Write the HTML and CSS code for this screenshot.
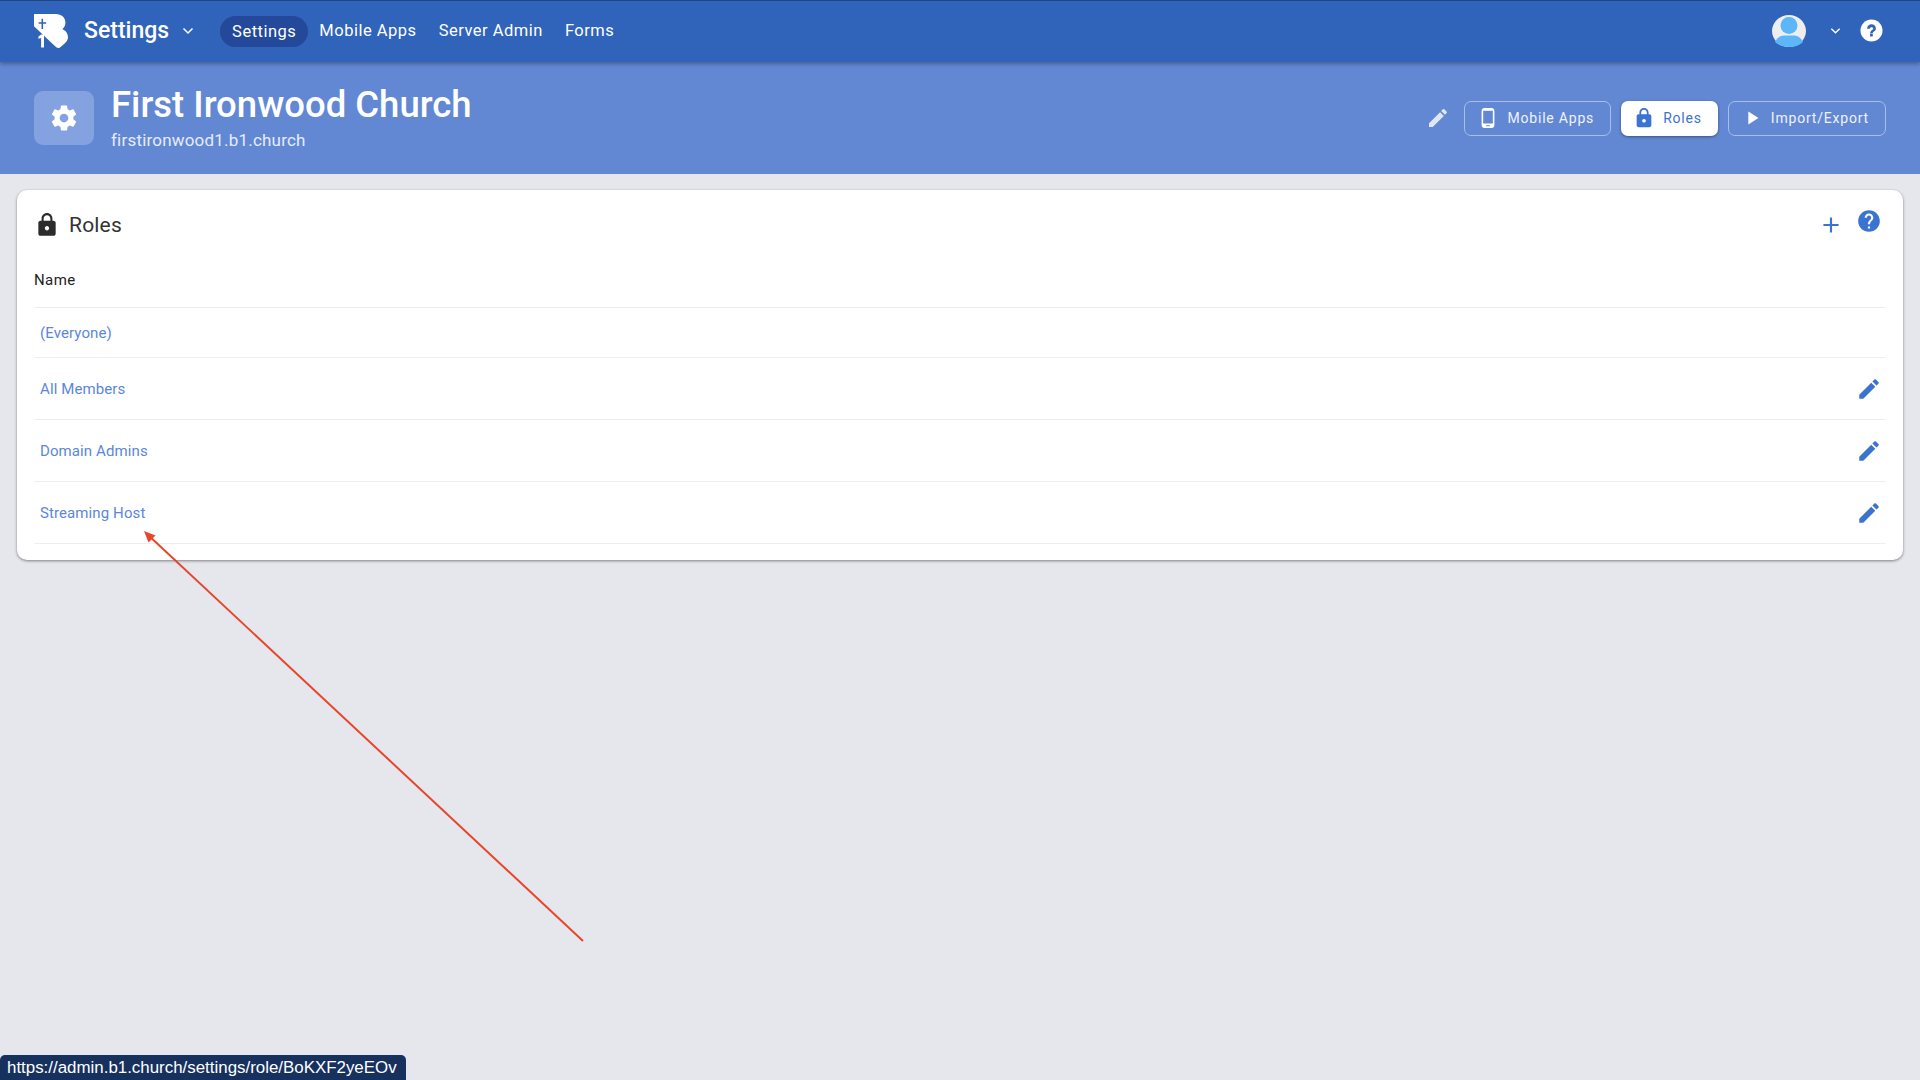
FILE: index.html
```html
<!DOCTYPE html>
<html lang="en">
<head>
<meta charset="utf-8">
<title>Roles</title>
<link rel="stylesheet" href="styles.css">
</head>
<body>
<header class="topbar">
  <svg class="logo" viewBox="0 0 33 33"><path fill="#fff" d="M0 0H21C27 0 30.500 3.500 30.500 8.500C30.500 11 29.500 13 27.500 14.500C30.800 16 33 19 33 22.500C33 26 30 28.500 27 31L24.500 33C23 33 21.800 32.500 20.500 31.200L0 12Z"/><path fill="#3063ba" d="M7.300 4.500H8.800V8H11.800V9.500H8.800V14.500H7.300V9.500H4.500V8H7.300Z"/><path fill="#fff" d="M7 20H9.700V32.500H6.900V23.300L4.300 24.100V21.800Z"/></svg>
  <div class="app-name">Settings</div>
  <svg class="chev chev-app" viewBox="0 0 12 8"><path d="M1.500 1.500 6 6l4.500-4.500"/></svg>
  <nav class="nav">
    <a class="nav-item nav-active">Settings</a>
    <a class="nav-item">Mobile Apps</a>
    <a class="nav-item">Server Admin</a>
    <a class="nav-item">Forms</a>
  </nav>
  <div class="top-right">
    <svg class="avatar" viewBox="0 0 34 32"><ellipse cx="17" cy="16" rx="17" ry="16" fill="#eeeeee"/><circle cx="17" cy="10.500" r="8.500" fill="#5db6fa"/><path fill="#5db6fa" d="M3 27C5 22.500 9 20.500 12 20.500H22C25 20.500 29 22.500 31 27C28 30 23 32 17 32S6 30 3 27Z"/></svg>
    <svg class="chev chev-user" viewBox="0 0 12 8"><path d="M1.500 1.500 6 6l4.500-4.500"/></svg>
    <svg class="help-top" viewBox="0 0 24 24"><circle cx="12" cy="12" r="11.500" fill="#fff"/><path fill="#3063ba" d="M13.300 18.200h-2.800v-2.700h2.800zM16.600 9.900c0 1.500-.8 2.300-1.700 3-.8.600-1.500 1.100-1.500 2h-2.800c0-1.700.8-2.500 1.700-3.200.8-.6 1.500-1 1.500-1.800 0-.8-.7-1.400-1.700-1.400-1.100 0-1.800.7-1.900 1.700H7.400C7.500 7.400 9.400 5.600 12 5.600c2.700 0 4.600 1.700 4.600 4.300z"/></svg>
  </div>
</header>

<section class="subheader">
  <div class="gear-box">
    <svg class="gear" viewBox="0 0 24 24"><path fill="#fff" d="M19.430 12.980c.04-.32.07-.64.07-.98s-.03-.66-.07-.98l2.110-1.650c.19-.15.24-.42.12-.64l-2-3.460c-.12-.22-.39-.3-.61-.22l-2.490 1c-.52-.4-1.080-.73-1.690-.98l-.38-2.650C14.460 2.180 14.250 2 14 2h-4c-.25 0-.46.18-.49.42l-.38 2.650c-.61.25-1.170.59-1.690.98l-2.490-1c-.23-.09-.49 0-.61.22l-2 3.460c-.13.22-.07.49.12.64l2.110 1.650c-.04.32-.07.65-.07.98s.03.66.07.98l-2.110 1.650c-.19.15-.24.42-.12.64l2 3.460c.12.22.39.3.61.22l2.490-1c.52.4 1.080.73 1.690.98l.38 2.650c.03.24.24.42.49.42h4c.25 0 .46-.18.49-.42l.38-2.650c.61-.25 1.170-.59 1.690-.98l2.490 1c.23.09.49 0 .61-.22l2-3.460c.12-.22.07-.49-.12-.64l-2.110-1.650zM12 15.500c-1.930 0-3.500-1.570-3.500-3.500s1.570-3.500 3.500-3.500 3.500 1.570 3.500 3.500-1.570 3.500-3.500 3.500z"/></svg>
  </div>
  <div class="org">
    <h1 class="org-name">First Ironwood Church</h1>
    <div class="org-domain">firstironwood1.b1.church</div>
  </div>
  <div class="actions">
    <svg class="icon-24 edit-light" viewBox="0 0 24 24"><path d="M3 17.250V21h3.750L17.810 9.940l-3.750-3.750L3 17.250zM20.710 7.040c.39-.39.39-1.020 0-1.410l-2.340-2.340c-.39-.39-1.020-.39-1.410 0l-1.830 1.830 3.750 3.750 1.830-1.830z"/></svg>
    <a class="btn btn-outline">
      <svg class="icon-24" viewBox="0 0 24 24"><path fill="#fff" d="M16 1H8C6.340 1 5 2.340 5 4v16c0 1.660 1.340 3 3 3h8c1.660 0 3-1.340 3-3V4c0-1.660-1.340-3-3-3zm-2 20h-4v-1h4v1zm3.250-3H6.750V4h10.500v14z"/></svg>
      Mobile Apps
    </a>
    <a class="btn btn-solid">
      <svg class="icon-24" viewBox="0 0 24 24"><path fill="#3b74d0" d="M18 8h-1V6c0-2.760-2.240-5-5-5S7 3.240 7 6v2H6c-1.100 0-2 .9-2 2v10c0 1.100.9 2 2 2h12c1.100 0 2-.9 2-2V10c0-1.100-.9-2-2-2zm-6 9c-1.100 0-2-.9-2-2s.9-2 2-2 2 .9 2 2-.9 2-2 2zm3.100-9H8.900V6c0-1.710 1.390-3.100 3.100-3.100 1.710 0 3.100 1.390 3.100 3.100v2z"/></svg>
      Roles
    </a>
    <a class="btn btn-outline">
      <svg class="icon-24" viewBox="0 0 24 24"><path fill="#fff" d="M8 5v14l11-7z"/></svg>
      Import/Export
    </a>
  </div>
</section>

<main class="content">
  <section class="card">
    <div class="card-head">
      <svg class="icon-24 lock-dark" viewBox="0 0 24 24"><path d="M18 8h-1V6c0-2.760-2.240-5-5-5S7 3.240 7 6v2H6c-1.100 0-2 .9-2 2v10c0 1.100.9 2 2 2h12c1.100 0 2-.9 2-2V10c0-1.100-.9-2-2-2zm-6 9c-1.100 0-2-.9-2-2s.9-2 2-2 2 .9 2 2-.9 2-2 2zm3.100-9H8.900V6c0-1.710 1.390-3.100 3.100-3.100 1.710 0 3.100 1.390 3.100 3.100v2z"/></svg>
      <h2 class="card-title">Roles</h2>
      <svg class="plus" viewBox="0 0 24 24"><path d="M19 13h-6v6h-2v-6H5v-2h6V5h2v6h6v2z"/></svg>
      <svg class="help-card" viewBox="0 0 24 24"><path d="M12 2C6.480 2 2 6.480 2 12s4.480 10 10 10 10-4.480 10-10S17.520 2 12 2zm1 17h-2v-2h2v2zm2.070-7.750-.9.920C13.450 12.900 13 13.500 13 15h-2v-.5c0-1.100.45-2.100 1.170-2.830l1.240-1.260c.37-.36.590-.86.590-1.410 0-1.100-.9-2-2-2s-2 .9-2 2H8c0-2.210 1.790-4 4-4s4 1.790 4 4c0 .88-.36 1.680-.93 2.250z"/></svg>
    </div>
    <div class="table-head">Name</div>
    <div class="row row-first"><a class="role">(Everyone)</a></div>
    <div class="row"><a class="role">All Members</a><svg class="icon-24 edit-blue" viewBox="0 0 24 24"><path d="M3 17.250V21h3.750L17.810 9.940l-3.750-3.750L3 17.250zM20.710 7.040c.39-.39.39-1.020 0-1.410l-2.340-2.340c-.39-.39-1.020-.39-1.410 0l-1.830 1.830 3.750 3.750 1.830-1.830z"/></svg></div>
    <div class="row"><a class="role">Domain Admins</a><svg class="icon-24 edit-blue" viewBox="0 0 24 24"><path d="M3 17.250V21h3.750L17.810 9.940l-3.750-3.750L3 17.250zM20.710 7.040c.39-.39.39-1.020 0-1.410l-2.340-2.340c-.39-.39-1.020-.39-1.410 0l-1.830 1.830 3.750 3.750 1.830-1.830z"/></svg></div>
    <div class="row"><a class="role">Streaming Host</a><svg class="icon-24 edit-blue" viewBox="0 0 24 24"><path d="M3 17.250V21h3.750L17.810 9.940l-3.750-3.750L3 17.250zM20.710 7.040c.39-.39.39-1.020 0-1.410l-2.340-2.340c-.39-.39-1.020-.39-1.410 0l-1.830 1.830 3.750 3.750 1.830-1.830z"/></svg></div>
  </section>
</main>

<svg class="annotation" viewBox="0 0 1920 1080"><path d="M583 941 147 534" stroke="#e8452c" stroke-width="2" fill="none"/><path d="M144 531l11.500 4.500-7 7z" fill="#e8452c"/></svg>
<div class="status-url">https://admin.b1.church/settings/role/BoKXF2yeEOv</div>
</body>
</html>
```
FILE: styles.css
```css
* { box-sizing: border-box; }
html, body { margin: 0; height: 100%; }
body {
  background: #e5e7ec;
  font-family: Roboto, "Liberation Sans", sans-serif;
  overflow: hidden;
  position: relative;
}
svg { display: block; flex: none; }

.topbar {
  height: 62px;
  background: #3063ba;
  border-top: 1px solid #22457f;
  box-shadow: 0 2px 4px rgba(0, 0, 0, .3);
  display: flex;
  align-items: center;
  padding: 0 0 2px 34px;
  position: relative;
  z-index: 2;
  color: #fff;
}
.logo { width: 34px; height: 34px; }
.app-name { font-size: 23px; font-weight: 500; margin-left: 16px; }
.chev { fill: none; stroke: #fff; stroke-width: 1.500; }
.chev-app { width: 12px; height: 8px; margin-left: 13px; }
.nav { display: flex; align-items: center; margin-left: 26px; }
.nav-item { font-size: 16.5px; letter-spacing: .5px; padding: 0 11px; margin-top: -1px; }
.nav-active {
  background: #24499a;
  border-radius: 16px;
  height: 31px;
  line-height: 31px;
  padding: 0 12px;
  margin-top: 1px;
}
.top-right { margin-left: auto; display: flex; align-items: center; }
.avatar { width: 34px; height: 32px; }
.chev-user { width: 11px; height: 8px; margin-left: 24px; }
.help-top { width: 23px; height: 23px; margin: 0 37px 0 19px; }

.subheader {
  height: 112px;
  background: #6288d4;
  display: flex;
  align-items: center;
  padding: 0 34px;
  color: #fff;
}
.gear-box {
  width: 60px;
  height: 54px;
  background: #84a2df;
  border-radius: 9px;
  display: flex;
  align-items: center;
  justify-content: center;
}
.gear { width: 30px; height: 30px; }
.org { margin-left: 17px; }
.org-name { margin: -3px 0 0; font-size: 36.5px; line-height: 44px; font-weight: 500; }
.org-domain { font-size: 17px; line-height: 20px; margin-top: 3px; color: #e6ecf8; letter-spacing: .2px; }
.actions { margin-left: auto; display: flex; align-items: center; gap: 10px; }
.icon-24 { width: 24px; height: 24px; }
.edit-light { fill: #dfe7f7; margin-right: 4px; }
.btn {
  height: 35px;
  border-radius: 7px;
  display: flex;
  align-items: center;
  gap: 8px;
  font-size: 14px;
  letter-spacing: .8px;
  padding: 0 16px 0 12px;
}
.btn-outline { border: 1px solid #a8bde8; color: #eef2fb; }
.btn-solid { background: #fff; color: #3b74d0; box-shadow: 0 1px 3px rgba(0, 0, 0, .4); }
.btn .icon-24 { width: 22px; height: 22px; }

.content { padding: 16px 17px 0; }
.card {
  background: #fff;
  border-radius: 10px;
  box-shadow: 0 1px 3px rgba(0, 0, 0, .45);
  padding: 0 17px 16px;
  height: 370px;
}
.card-head { height: 69px; display: flex; align-items: center; }
.lock-dark { fill: #2c2c2c; width: 26px; height: 26px; }
.card-title { font-size: 21px; font-weight: 400; color: #333; margin: 0 0 0 9px; letter-spacing: .2px; }
.plus { width: 26px; height: 26px; fill: #3b74d0; margin-left: auto; }
.help-card { width: 26px; height: 26px; fill: #3b74d0; margin: -8px 4px 0 12px; }
.table-head {
  height: 49px;
  font-size: 15px;
  font-weight: 400;
  color: #222;
  letter-spacing: .4px;
  border-bottom: 1px solid #eeeeee;
  padding: 13px 0 0 0;
  line-height: 16px;
}
.row {
  height: 62px;
  display: flex;
  align-items: center;
  justify-content: space-between;
  padding: 0 4px 0 6px;
  border-bottom: 1px solid #eeeeee;
}
.row-first { height: 50px; }
.role { font-size: 15px; color: #5b87db; letter-spacing: .1px; }
.edit-blue { fill: #3b74d0; width: 26px; height: 26px; }

.annotation { position: absolute; inset: 0; width: 1920px; height: 1080px; pointer-events: none; }
.status-url {
  position: absolute;
  left: 0;
  bottom: 0;
  width: 406px;
  height: 25px;
  background: #17315f;
  border-radius: 5px 5px 0 0;
  color: #fff;
  font-family: "Liberation Sans", Arial, sans-serif;
  font-size: 16.9px;
  line-height: 26px;
  padding-left: 7px;
  white-space: nowrap;
}
```
